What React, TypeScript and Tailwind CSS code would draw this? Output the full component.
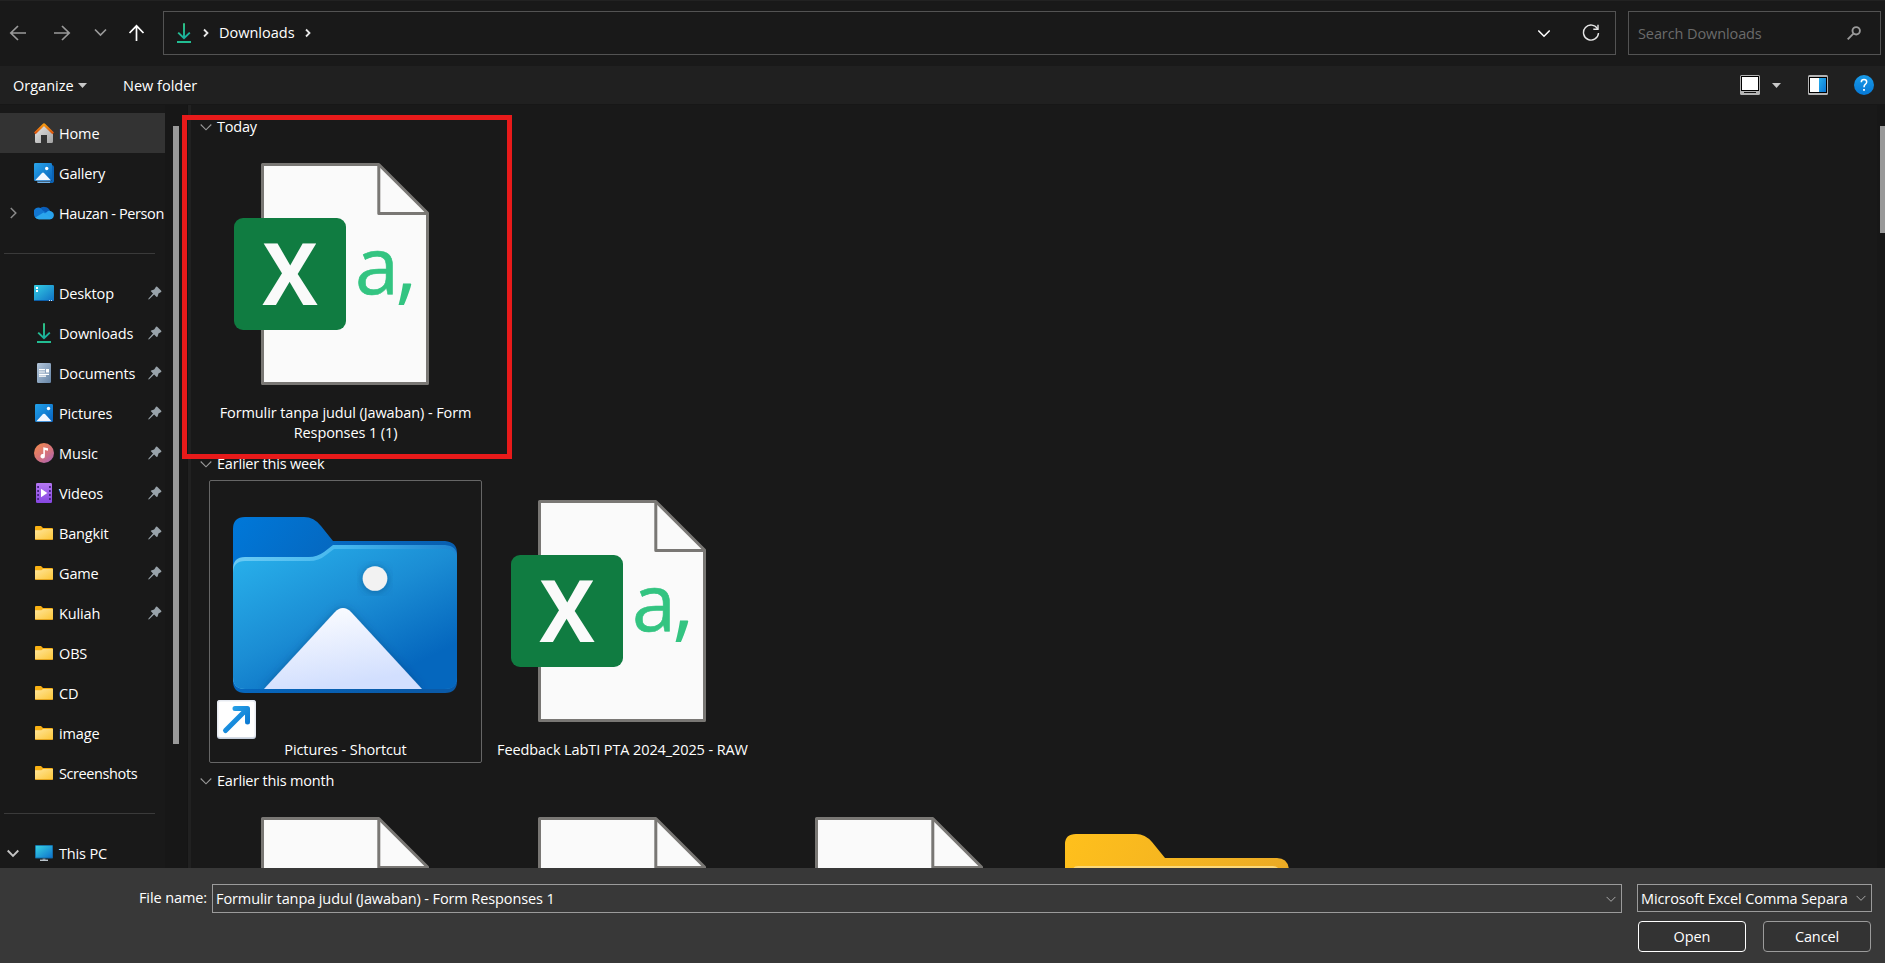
import React from 'react';

type IconProps = { className?: string };

const Chevron = ({ d, w = 1.6, color, className }: { d: string; w?: number; color: string; className?: string }) => (
  <svg viewBox="0 0 12 12" className={className ?? 'size-3'} fill="none" stroke={color} strokeWidth={w}>
    <path d={d} />
  </svg>
);
const DOWN = 'M0.7 3.5 L6 8.8 L11.3 3.5';

const HomeIcon = () => (
  <svg viewBox="0 0 20 20" className="size-5">
    <defs>
      <linearGradient id="hm" x1="0" y1="0" x2="1" y2="1"><stop stopColor="#e8e8e8" /><stop offset="1" stopColor="#a3a3a3" /></linearGradient>
      <linearGradient id="hr" x1="0" y1="0" x2="0" y2="1"><stop stopColor="#f59a12" /><stop offset="1" stopColor="#d9500c" /></linearGradient>
    </defs>
    <path d="M1 9 L10 1 L19 9 V18.5 Q19 20 17.6 20 H13 V12 H7 V20 H2.4 Q1 20 1 18.5Z" fill="url(#hm)" />
    <path d="M0.8 10.4 L10 1.4 L19.2 10.4" fill="none" stroke="url(#hr)" strokeWidth="2.4" strokeLinejoin="round" />
  </svg>
);
const GalleryIcon = () => (
  <svg viewBox="0 0 20 20" className="size-5">
    <defs><linearGradient id="gl" x1="0" y1="0" x2="1" y2="1"><stop stopColor="#2aa5ea" /><stop offset="1" stopColor="#0863bd" /></linearGradient></defs>
    <path d="M3 18.5 H18 V20 H4.5 Q3 20 3 18.5Z" fill="#6fb2ea" />
    <path d="M18 2 Q20 2.3 20 4 V18.3 Q20 19.5 18.5 20 H16V18H18Z" fill="#0b63b5" />
    <rect width="18" height="18" rx="1.2" fill="url(#gl)" />
    <path d="M1.2 17.3 L8 9.9 Q9 9 10 9.9 L16.8 17.3Z" fill="#f3f7ff" />
    <circle cx="12.7" cy="5.5" r="1.7" fill="#fff" />
  </svg>
);
const CloudIcon = () => (
  <svg viewBox="0 0 20 20" className="size-5">
    <path d="M4.800 7 A6.300 6.300 0 0 1 16 7.600 L11 13Z" fill="#0a5db8" />
    <path d="M4.600 16 A4.700 4.900 0 0 1 0 11.300 A4.700 4.700 0 0 1 8.500 7.200 L16 12 L6 16Z" fill="#1277d2" />
    <path d="M4 16 L12.500 9.200 Q14.600 7 17.200 8.200 A4.200 4.200 0 0 1 16 16.300 H5Z" fill="#28a2ec" />
    <path d="M1.300 14.600 L9.500 9.600 L18 15.600 L16 16.300 H4.700 Q2.600 16.200 1.300 14.600Z" fill="#2ba6ec" />
  </svg>
);
const DesktopIcon = () => (
  <svg viewBox="0 0 20 20" className="size-5">
    <defs><linearGradient id="dk" x1="0" y1="0" x2="1" y2="1"><stop stopColor="#35cfe4" /><stop offset="1" stopColor="#0f6fc4" /></linearGradient></defs>
    <rect y="2" width="20" height="16" rx="1" fill="url(#dk)" />
    <path d="M2 4h2v2H2zM2 7h2v2H2z" fill="#fff" />
    <path d="M0 17h20v.2a1 1 0 0 1-1 .8H1a1 1 0 0 1-1-1z" fill="#0c5ea8" />
    <path d="M15 17h1v1h-1zM17 17h1v1h-1z" fill="#cfe6fa" />
  </svg>
);
const DownloadIcon = ({ className }: IconProps) => (
  <svg viewBox="0 0 20 20" className={className ?? 'size-5'} fill="none">
    <defs><linearGradient id="dl" gradientUnits="userSpaceOnUse" x1="4" y1="0" x2="14" y2="18"><stop stopColor="#35d183" /><stop offset="1" stopColor="#10a5a5" /></linearGradient></defs>
    <path d="M10 .3 V15.500 M4.200 9.600 L10 15.200 L15.800 9.600" stroke="url(#dl)" strokeWidth="1.900" />
    <path d="M3 19 H17" stroke="#22bd92" strokeWidth="2" />
  </svg>
);
const DocumentIcon = () => (
  <svg viewBox="0 0 20 20" className="size-5">
    <defs><linearGradient id="dc" x1="0" y1="0" x2="1" y2="1"><stop stopColor="#b4c6da" /><stop offset="1" stopColor="#6685a6" /></linearGradient></defs>
    <rect x="3" width="14" height="20" rx="1.2" fill="url(#dc)" />
    <path d="M5 6h6v1.2H5zM5 8.4h6v1.2H5zM12 6h3v3.4h-3zM5 10.7h10v1.2H5zM5 12.6h7v1.2H5z" fill="#fff" />
  </svg>
);
const PicturesIcon = () => (
  <svg viewBox="0 0 20 20" className="size-5">
    <defs><linearGradient id="pc" x1="0" y1="0" x2="1" y2="1"><stop stopColor="#22a2ea" /><stop offset="1" stopColor="#0862c0" /></linearGradient></defs>
    <rect x="1" y="1" width="18" height="18" rx="1.2" fill="url(#pc)" />
    <path d="M2.4 18.2 L9 11.1 Q10 10.2 11 11.1 L17.6 18.2Z" fill="#f3f7ff" />
    <circle cx="14.5" cy="5.5" r="1.7" fill="#fff" />
  </svg>
);
const MusicIcon = () => (
  <svg viewBox="0 0 20 20" className="size-5">
    <defs><linearGradient id="mu" x1="0.1" y1="0" x2="0.9" y2="1"><stop stopColor="#f28a4e" /><stop offset=".55" stopColor="#d5737b" /><stop offset="1" stopColor="#a861b8" /></linearGradient></defs>
    <circle cx="10" cy="10" r="10" fill="url(#mu)" />
    <path d="M9.3 4.2 L14 5.2 V7.8 L10.9 7 V13.2 A2.2 2.2 0 1 1 9.3 11.1Z" fill="#fff" />
  </svg>
);
const VideoIcon = () => (
  <svg viewBox="0 0 20 20" className="size-5">
    <defs><linearGradient id="vd" x1="0" y1="0" x2="0" y2="1"><stop stopColor="#b678f4" /><stop offset="1" stopColor="#8546e0" /></linearGradient></defs>
    <rect x="2" width="16" height="20" rx="1.2" fill="url(#vd)" />
    <path d="M3.2 3h1.8v2H3.2zM3.2 7h1.8v2H3.2zM3.2 11h1.8v2H3.2zM3.2 15h1.8v2H3.2zM15 3h1.8v2H15zM15 7h1.8v2H15zM15 11h1.8v2H15zM15 15h1.8v2H15z" fill="#472383" />
    <path d="M7 5.8 L13.3 10 L7 14.2Z" fill="#fff" />
  </svg>
);
const FolderIcon = () => (
  <svg viewBox="0 0 20 20" className="size-5">
    <defs><linearGradient id="fd" x1="0" y1="0" x2="1" y2="1"><stop stopColor="#ffe69b" /><stop offset="1" stopColor="#fcc638" /></linearGradient></defs>
    <path d="M1 4.200 Q1 3 2 3 H7 L9 5 H18 Q19 5 19 6 V8 H1Z" fill="#f9b114" />
    <path d="M1 7.200 H7.400 L9 6 H19 V16 Q19 16.400 18.500 16.400 H1.500 Q1 16.400 1 16Z" fill="url(#fd)" />
    <path d="M1 16 H19 V16.200 Q19 17 18 17 H2 Q1 17 1 16.200Z" fill="#e3a31c" />
  </svg>
);
const PcIcon = () => (
  <svg viewBox="0 0 20 20" className="size-5">
    <defs><linearGradient id="tp" x1="0" y1="0" x2="1" y2="1"><stop stopColor="#38d3e2" /><stop offset="1" stopColor="#0e72cc" /></linearGradient></defs>
    <rect x="1" y="2" width="18" height="13.6" rx=".8" fill="#12649d" />
    <rect x="1.8" y="2.8" width="16.4" height="11.8" fill="url(#tp)" />
    <path d="M8.6 15.6h2.8v1.2H8.6z" fill="#8c9aa6" />
    <path d="M6 16.6h8V18H6z" fill="#b9c3cb" />
  </svg>
);
const PinIcon = () => (
  <svg viewBox="0 0 14 14" className="size-3.5" fill="#98a2a9">
    <path d="M8 .8 Q8.6 .2 9.2 .8 L13.2 4.8 Q13.7 5.5 13.1 5.9 L10.5 7.6 L9.6 10.6 Q9.2 11.4 8.6 10.9 L6.1 8.6 L1.2 13.2 L.3 13.4 L.5 12.5 L5 7.6 L2.9 5.3 Q2.5 4.7 3.2 4.4 L6.2 3.4Z" />
  </svg>
);

const Sheet = () => (
  <>
    <path d="M28.500 1.500 H144.800 L193.500 50 V220.500 H28.500Z" fill="#fafafa" stroke="#797774" strokeWidth="3" strokeLinejoin="round" />
    <path d="M144.800 2 V50.500 H193.500" fill="none" stroke="#797774" strokeWidth="3" strokeLinejoin="round" />
  </>
);

const ExcelFile = () => (
  <svg viewBox="0 0 224 224" className="h-56 w-56">
    <Sheet />
    <rect y="55" width="112" height="112" rx="9" fill="#107c41" />
    <text x="56" y="141.5" textAnchor="middle" fontFamily="Open Sans" fontWeight="700" fontSize="86" textLength="55" lengthAdjust="spacingAndGlyphs" fill="#fafafa">X</text>
    <text x="121" y="131" fontFamily="Open Sans" fontSize="79" stroke="#33c481" strokeWidth=".6" fill="#33c481">a</text>
    <text x="161" y="131" fontFamily="Open Sans" fontSize="88" fill="#33c481">,</text>
  </svg>
);

const BlankFile = () => (
  <svg viewBox="0 0 224 224" className="h-56 w-56">
    <Sheet />
  </svg>
);

const PicturesFolder = () => (
  <svg viewBox="1 7 224 224" className="h-56 w-56 overflow-visible">
    <defs>
      <linearGradient id="pb" x1="0" y1="0" x2="1" y2=".6"><stop stopColor="#0078d9" /><stop offset=".5" stopColor="#0665bb" /><stop offset="1" stopColor="#0a5aa8" /></linearGradient>
      <linearGradient id="pf" x1=".1" y1="0" x2=".9" y2="1"><stop stopColor="#28afea" /><stop offset=".45" stopColor="#1b8dd4" /><stop offset=".85" stopColor="#0567be" /></linearGradient>
      <linearGradient id="ph" x1="0" y1="0" x2="1" y2="0"><stop stopColor="#6bcbf4" /><stop offset=".5" stopColor="#45b7ee" /><stop offset="1" stopColor="#1f84d0" /></linearGradient>
      <linearGradient id="pm" x1="0" y1="0" x2=".3" y2="1"><stop stopColor="#ffffff" /><stop offset="1" stopColor="#d2dffe" /></linearGradient>
      <filter id="ps" x="-20%" y="-20%" width="140%" height="140%"><feDropShadow dx="0" dy="1" stdDeviation="4" floodColor="#033c74" floodOpacity=".55" /></filter>
      <clipPath id="pcl"><path d="M0 0H224V196H0Z" /></clipPath>
    </defs>
    <path d="M0 36 Q0 24 12 24 H71 Q81 24 88 33 L100 48 H212 Q224 49 224 60 V188 Q224 200 212 200 H12 Q0 200 0 188Z" fill="url(#pb)" />
    <path d="M0 76 Q0 64 12 64 H76 Q84 64 91 59 L100 52 H212 Q224 53 224 63 V184 Q224 196 212 196 H12 Q0 196 0 184Z" fill="url(#ph)" />
    <path d="M0 80 Q0 68 12 68 H76 Q86 68 93 62 L101 56 H212 Q224 56 224 67 V184 Q224 196 212 196 H12 Q0 196 0 184Z" fill="url(#pf)" />
    <g clipPath="url(#pcl)">
      <circle cx="142" cy="85.500" r="12.300" fill="#f2f2f2" filter="url(#ps)" />
      <path d="M31 196 L102 119 Q110 111 118 119 L189 196Z" fill="url(#pm)" filter="url(#ps)" />
    </g>
  </svg>
);

const ShortcutBadge = () => (
  <svg viewBox="0 0 39 39" className="size-[39px]">
    <defs><linearGradient id="sa" x1="0" y1="0" x2="1" y2="1"><stop stopColor="#2aa6ea" /><stop offset="1" stopColor="#0672cf" /></linearGradient></defs>
    <rect width="39" height="39" rx="3" fill="#c5cedb" />
    <rect width="39" height="37.500" rx="3" fill="#e6eaf1" />
    <rect x="1.500" y="1.500" width="36" height="35.500" rx="2" fill="#fff" />
    <path d="M8.500 30.500 L30 9 M18 8.500 H30.500 V22" fill="none" stroke="url(#sa)" strokeWidth="5" strokeLinecap="round" strokeLinejoin="round" />
  </svg>
);

const YellowFolder = () => (
  <svg viewBox="0 7 224 224" className="h-56 w-56">
    <defs>
      <linearGradient id="yb" x1="0" y1="0" x2="1" y2=".4"><stop stopColor="#ffc01c" /><stop offset="1" stopColor="#eaa925" /></linearGradient>
    </defs>
    <path d="M0 34 Q0 24 11 24 H71 Q80 24 87 32 L100 48 H212 Q223 48 224 60 V188 Q224 200 212 200 H12 Q0 200 0 188Z" fill="url(#yb)" />
    <path d="M8 60 Q8 56 13 56 H208 Q213 56 216 62 V190 H8Z" fill="#fbd879" />
  </svg>
);

const places = [
  { name: 'Desktop', Icon: DesktopIcon, pin: true },
  { name: 'Downloads', Icon: DownloadIcon, pin: true },
  { name: 'Documents', Icon: DocumentIcon, pin: true },
  { name: 'Pictures', Icon: PicturesIcon, pin: true },
  { name: 'Music', Icon: MusicIcon, pin: true },
  { name: 'Videos', Icon: VideoIcon, pin: true },
  { name: 'Bangkit', Icon: FolderIcon, pin: true },
  { name: 'Game', Icon: FolderIcon, pin: true },
  { name: 'Kuliah', Icon: FolderIcon, pin: true },
  { name: 'OBS', Icon: FolderIcon, pin: false },
  { name: 'CD', Icon: FolderIcon, pin: false },
  { name: 'image', Icon: FolderIcon, pin: false },
  { name: 'Screenshots', Icon: FolderIcon, pin: false },
];

function NavRow({ name, Icon, pin, active, expander }: { name: string; Icon: React.FC; pin?: boolean; active?: boolean; expander?: React.ReactNode }) {
  return (
    <div className={`flex h-10 w-[165px] shrink-0 items-center overflow-hidden whitespace-nowrap ${active ? 'bg-[#333333]' : ''}`}>
      <span className="flex w-[34px] shrink-0 items-center pl-[7px]">{expander}</span>
      <span className="shrink-0"><Icon /></span>
      <span className={`ml-[5px] shrink-0 pt-0.5 ${name.length > 9 ? 'tracking-[-0.4px]' : 'tracking-[-0.15px]'}`}>{name}</span>
      {pin && <span className="ml-auto mr-[3px] shrink-0"><PinIcon /></span>}
    </div>
  );
}

const Separator = () => (
  <div className="flex h-10 shrink-0 items-center pl-1"><div className="h-px w-[151px] bg-[#3a3a3a]" /></div>
);

function GroupHeader({ title }: { title: string }) {
  return (
    <div className="flex h-[34px] items-center gap-[5px] pl-[9px] pt-0.5">
      <Chevron d={DOWN} color="#9a9a9a" w={1.1} />
      <span className="whitespace-nowrap tracking-[-0.2px]">{title}</span>
    </div>
  );
}

function Tile({ children, caption, focused }: { children: React.ReactNode; caption?: React.ReactNode; focused?: boolean }) {
  return (
    <div className={`relative flex w-[273px] flex-col rounded-[2px] border pb-[2px] pt-[19px] ${focused ? 'border-[#666666]' : 'border-transparent'}`}>
      <div className="h-56 pl-6">{children}</div>
      <div className="mt-4 whitespace-nowrap text-center leading-5">{caption}</div>
    </div>
  );
}

export default function App() {
  return (
    <div className="flex h-[963px] w-[1885px] flex-col overflow-hidden bg-[#191919] font-['Open_Sans',sans-serif] text-[14.5px] leading-5 tracking-[-0.1px] text-white">
      <header className="flex h-[66px] shrink-0 items-start border-t border-[#222222] pt-2.5">
        <div className="flex h-11 w-[163px] items-center">
          <svg viewBox="0 0 163 44" className="h-11 w-[163px]" fill="none" strokeWidth="1.7">
            <path d="M26 22 H11 M18 15 L10.800 22 L18 29" stroke="#9a9a9a" />
            <path d="M54 22 H69 M62 15 L69.200 22 L62 29" stroke="#9a9a9a" />
            <path d="M95 18.500 L100.500 24 L106 18.500" stroke="#9a9a9a" />
            <path d="M136.500 30 V15 M129.500 22 L136.500 14.800 L143.500 22" stroke="#ffffff" />
          </svg>
        </div>
        <div className="flex h-11 w-[1453px] items-center border border-[#535353]">
          <DownloadIcon className="ml-[10px] size-5" />
          <Chevron d="M4 2.500 L7.500 6 L4 9.500" color="#e8e8e8" w={1.8} className="ml-[6px] size-3" />
          <span className="ml-[7px] tracking-normal">Downloads</span>
          <Chevron d="M4 2.500 L7.500 6 L4 9.500" color="#e8e8e8" w={1.8} className="ml-[7px] size-3" />
          <Chevron d="M0.300 3.500 L6 9.200 L11.700 3.500" color="#ffffff" w={1.5} className="ml-auto mr-8 size-3" />
          <svg viewBox="0 0 18 18" className="mr-[15px] size-[18px]" fill="none" stroke="#e6e6e6" strokeWidth="1.400">
            <path d="M15.600 5 A7.500 7.500 0 1 0 16.500 9" />
            <path d="M16 .8 V5.300 H11.300" />
          </svg>
        </div>
        <div className="ml-3 flex h-11 w-[253px] items-center border border-[#535353]">
          <span className="ml-[9px] mt-0.5 text-[#6b6b6b]">Search Downloads</span>
          <svg viewBox="0 0 14 14" className="ml-auto mr-[19px] size-3.5" fill="none" stroke="#9a9a9a">
            <circle cx="9.200" cy="4.800" r="3.700" strokeWidth="1.900" />
            <path d="M6.400 7.600 L.7 13.300" strokeWidth="1.900" />
          </svg>
        </div>
      </header>

      <div className="flex h-[39px] shrink-0 items-center border-b border-[#171717] bg-[#202020]">
        <span className="ml-[13px] w-[61px] pt-0.5 tracking-normal">Organize</span>
        <svg viewBox="0 0 9 5" className="ml-1 h-[5px] w-[9px]"><path d="M0 0H9L4.500 5Z" fill="#c8c8c8" /></svg>
        <span className="ml-9 pt-0.5 tracking-normal">New folder</span>
        <svg viewBox="0 0 20 20" className="ml-auto size-5">
          <rect width="20" height="20" rx="1.500" fill="#b4b4b4" /><path d="M1 1H19V16H1Z" fill="#000" /><path d="M2 2H18V15H2Z" fill="#fff" /><path d="M4 17H16V18H4Z" fill="#111" />
        </svg>
        <svg viewBox="0 0 9 5" className="ml-3 h-[5px] w-[9px]"><path d="M0 0H9L4.500 5Z" fill="#c8c8c8" /></svg>
        <svg viewBox="0 0 20 20" className="ml-[27px] size-5">
          <defs><linearGradient id="pv" x1="0" y1="0" x2="1" y2="1"><stop stopColor="#27b0ee" /><stop offset="1" stopColor="#0a74d2" /></linearGradient></defs>
          <rect width="20" height="20" rx="1.500" fill="#b4b4b4" /><path d="M1 2H19V18H1Z" fill="#000" /><path d="M2 3H11V17H2Z" fill="#fff" /><path d="M11 3H18V17H11Z" fill="url(#pv)" />
        </svg>
        <svg viewBox="0 0 20 20" className="ml-[26px] mr-[11px] size-5">
          <defs><linearGradient id="hp" x1="0" y1="0" x2="0" y2="1"><stop stopColor="#189ae8" /><stop offset="1" stopColor="#0678d6" /></linearGradient></defs>
          <circle cx="10" cy="10" r="10" fill="url(#hp)" />
          <path d="M7.300 7.200 Q7.300 4.600 10 4.600 Q12.700 4.600 12.700 7 Q12.700 8.300 11.200 9.400 Q10 10.300 10 12.200" fill="none" stroke="#fff" strokeWidth="1.500" />
          <rect x="9.100" y="14" width="1.800" height="1.800" fill="#fff" />
        </svg>
      </div>

      <div className="flex h-[763px] shrink-0 overflow-hidden">
        <nav className="flex w-[165px] shrink-0 flex-col pt-2">
          <NavRow name="Home" Icon={HomeIcon} active />
          <NavRow name="Gallery" Icon={GalleryIcon} />
          <NavRow name="Hauzan - Person" Icon={CloudIcon} expander={<Chevron d="M3.800 1 L8.800 6 L3.800 11" color="#8a8a8a" w={1.5} />} />
          <Separator />
          {places.map((p) => <NavRow key={p.name} {...p} />)}
          <Separator />
          <NavRow name="This PC" Icon={PcIcon} expander={<Chevron d={DOWN} color="#c4c4c4" w={1.900} />} />
        </nav>
        <div className="w-[22px] shrink-0 bg-[#171717] pl-2 pt-[21px]"><div className="h-[618px] w-1.5 bg-[#999999]" /></div>
        <div className="w-1 shrink-0 border-l border-[#151515] bg-[#212121]" />
        <main className="relative min-w-0 flex-1 pt-1">
          <GroupHeader title="Today" />
          <div className="ml-[18px] flex gap-1">
            <Tile caption={<>Formulir tanpa judul (Jawaban) - Form<br />Responses 1 (1)</>}><ExcelFile /></Tile>
          </div>
          <GroupHeader title="Earlier this week" />
          <div className="ml-[18px] flex gap-1">
            <Tile focused caption="Pictures - Shortcut">
              <PicturesFolder />
              <div className="absolute left-[7px] top-[219px]"><ShortcutBadge /></div>
            </Tile>
            <Tile caption="Feedback LabTI PTA 2024_2025 - RAW"><ExcelFile /></Tile>
          </div>
          <GroupHeader title="Earlier this month" />
          <div className="ml-[18px] flex gap-1">
            <Tile><BlankFile /></Tile>
            <Tile><BlankFile /></Tile>
            <Tile><BlankFile /></Tile>
            <Tile><YellowFolder /></Tile>
          </div>
          <div className="absolute -left-[9px] top-[10px] h-[344px] w-[330px] border-[5px] border-[#e81a1a]" />
        </main>
        <div className="flex w-2 shrink-0 justify-end bg-[#171717] pt-[21px]"><div className="h-[107px] w-[5px] bg-[#999999]" /></div>
      </div>

      <footer className="flex h-[95px] shrink-0 flex-col bg-[#383838] pt-4">
        <div className="flex h-[29px] items-start">
          <span className="flex h-7 w-[212px] items-center justify-end pr-[5px]">File name:</span>
          <div className="flex h-[29px] w-[1410px] items-center justify-between border border-[#9b9b9b] pl-[3px] pr-[5px]">
            <span>Formulir tanpa judul (Jawaban) - Form Responses 1</span>
            <Chevron d={DOWN} color="#b5b5b5" w={1.1} className="size-2.5" />
          </div>
          <div className="ml-[15px] flex h-7 w-[235px] items-center justify-between border border-[#9b9b9b] bg-[#333333] pl-[3px] pr-[5px]">
            <span className="whitespace-nowrap pt-0.5">Microsoft Excel Comma Separa</span>
            <Chevron d={DOWN} color="#b5b5b5" w={1.1} className="size-2.5" />
          </div>
        </div>
        <div className="mt-2 flex justify-end gap-[17px] pr-3.5">
          <button className="h-[31px] w-[108px] rounded-[4px] border border-white bg-[#333333]">Open</button>
          <button className="h-[31px] w-[108px] rounded-[4px] border border-[#9b9b9b] bg-[#333333]">Cancel</button>
        </div>
      </footer>
    </div>
  );
}
